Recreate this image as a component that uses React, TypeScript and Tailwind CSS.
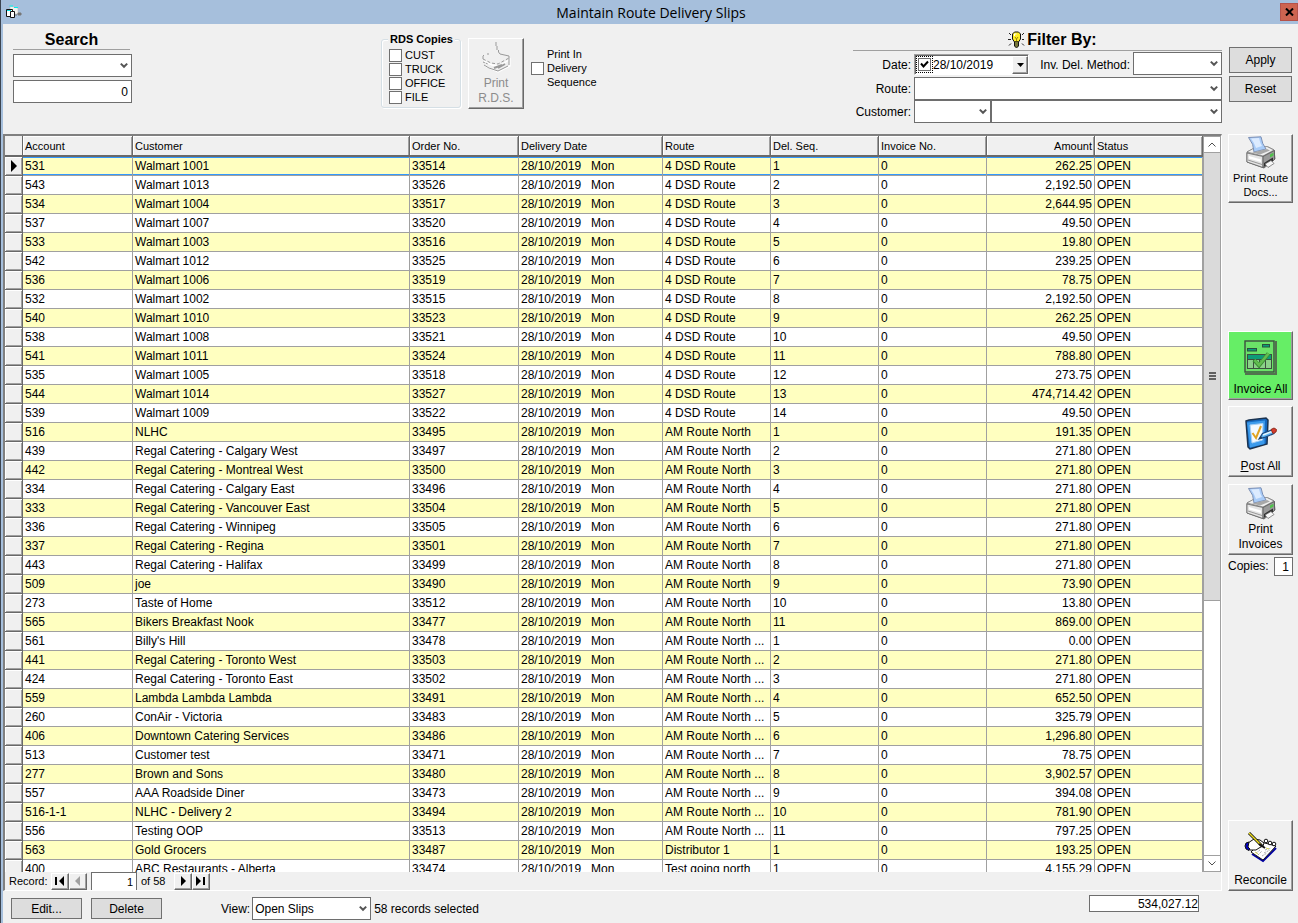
import type { ReactNode } from "react";

const columns = [
  { title: "Account", width: "w-[110px]" },
  { title: "Customer", width: "" },
  { title: "Order No.", width: "w-[109px]" },
  { title: "Delivery Date", width: "w-[144px]" },
  { title: "Route", width: "w-[108px]" },
  { title: "Del. Seq.", width: "w-[108px]" },
  { title: "Invoice No.", width: "w-[108px]" },
  { title: "Amount", width: "w-[108px]", right: true },
  { title: "Status", width: "w-[108px]" },
];

// account, customer, order, route, sequence, amount
const slips = [
  ["531", "Walmart 1001", "33514", "4 DSD Route", "1", "262.25"],
  ["543", "Walmart 1013", "33526", "4 DSD Route", "2", "2,192.50"],
  ["534", "Walmart 1004", "33517", "4 DSD Route", "3", "2,644.95"],
  ["537", "Walmart 1007", "33520", "4 DSD Route", "4", "49.50"],
  ["533", "Walmart 1003", "33516", "4 DSD Route", "5", "19.80"],
  ["542", "Walmart 1012", "33525", "4 DSD Route", "6", "239.25"],
  ["536", "Walmart 1006", "33519", "4 DSD Route", "7", "78.75"],
  ["532", "Walmart 1002", "33515", "4 DSD Route", "8", "2,192.50"],
  ["540", "Walmart 1010", "33523", "4 DSD Route", "9", "262.25"],
  ["538", "Walmart 1008", "33521", "4 DSD Route", "10", "49.50"],
  ["541", "Walmart 1011", "33524", "4 DSD Route", "11", "788.80"],
  ["535", "Walmart 1005", "33518", "4 DSD Route", "12", "273.75"],
  ["544", "Walmart 1014", "33527", "4 DSD Route", "13", "474,714.42"],
  ["539", "Walmart 1009", "33522", "4 DSD Route", "14", "49.50"],
  ["516", "NLHC", "33495", "AM Route North", "1", "191.35"],
  ["439", "Regal Catering - Calgary West", "33497", "AM Route North", "2", "271.80"],
  ["442", "Regal Catering - Montreal West", "33500", "AM Route North", "3", "271.80"],
  ["334", "Regal Catering - Calgary East", "33496", "AM Route North", "4", "271.80"],
  ["333", "Regal Catering - Vancouver East", "33504", "AM Route North", "5", "271.80"],
  ["336", "Regal Catering - Winnipeg", "33505", "AM Route North", "6", "271.80"],
  ["337", "Regal Catering - Regina", "33501", "AM Route North", "7", "271.80"],
  ["443", "Regal Catering - Halifax", "33499", "AM Route North", "8", "271.80"],
  ["509", "joe", "33490", "AM Route North", "9", "73.90"],
  ["273", "Taste of Home", "33512", "AM Route North", "10", "13.80"],
  ["565", "Bikers Breakfast Nook", "33477", "AM Route North", "11", "869.00"],
  ["561", "Billy's Hill", "33478", "AM Route North ...", "1", "0.00"],
  ["441", "Regal Catering - Toronto West", "33503", "AM Route North ...", "2", "271.80"],
  ["424", "Regal Catering - Toronto East", "33502", "AM Route North ...", "3", "271.80"],
  ["559", "Lambda Lambda Lambda", "33491", "AM Route North ...", "4", "652.50"],
  ["260", "ConAir - Victoria", "33483", "AM Route North ...", "5", "325.79"],
  ["406", "Downtown Catering Services", "33486", "AM Route North ...", "6", "1,296.80"],
  ["513", "Customer test", "33471", "AM Route North ...", "7", "78.75"],
  ["277", "Brown and Sons", "33480", "AM Route North ...", "8", "3,902.57"],
  ["557", "AAA Roadside Diner", "33473", "AM Route North ...", "9", "394.08"],
  ["516-1-1", "NLHC - Delivery 2", "33494", "AM Route North ...", "10", "781.90"],
  ["556", "Testing OOP", "33513", "AM Route North ...", "11", "797.25"],
  ["563", "Gold Grocers", "33487", "Distributor 1", "1", "193.25"],
  ["400", "ABC Restaurants - Alberta", "33474", "Test going north", "1", "4,155.29"],
];

const raised =
  "border border-t-white border-l-white border-r-[#696969] border-b-[#696969] shadow-[inset_-1px_-1px_#a0a0a0]";

function Chevron() {
  return (
    <svg className="absolute right-1 top-1/2 -mt-1 pointer-events-none" width="8" height="8" viewBox="0 0 8 8">
      <path d="M0.8 1.6 4 4.8 7.2 1.6" fill="none" stroke="#555" strokeWidth="2" />
    </svg>
  );
}

function Dropdown({ label, className, options = [""] }: { label: string; className: string; options?: string[] }) {
  return (
    <div className={`relative ${className}`}>
      <select aria-label={label} className="block w-full h-[23px] appearance-none border border-[#6e6e6e] bg-white pl-[2px] text-[12px]">
        {options.map((option) => (
          <option key={option}>{option}</option>
        ))}
      </select>
      <Chevron />
    </div>
  );
}

function FlatButton({ children, className }: { children: ReactNode; className: string }) {
  return (
    <button className={`border border-[#707070] bg-[#dddddd] text-[12px] ${className}`}>{children}</button>
  );
}

function ToolButton({ icon, children, className = "" }: { icon: ReactNode; children: ReactNode; className?: string }) {
  return (
    <button className={`flex flex-col items-center justify-end w-full ${raised} ${className}`}>
      {icon}
      {children}
    </button>
  );
}

function PrinterIcon() {
  return (
    <svg width="30" height="33" viewBox="0 0 30 33">
      <path d="M1 16 9 12 22 11 28 14 29 23 18 32 1 26Z" fill="#cfcfcf" stroke="#6c6c6c" />
      <path d="M1 16 9 11.500 21 10.500 28 14 17 20Z" fill="#efefef" stroke="#858585" strokeWidth=".8" />
      <path d="M2.500 1.500 15 0.800Q16 8 20 13L8 16Q8 8 2.500 1.500Z" fill="#a9ccf8" stroke="#7b8fb5" />
      <path d="M5 2.500 13 2Q14 7 16 10L10 12Q8.500 7 5 2.500Z" fill="#dcebff" />
      <path d="M6 16.500 21 13 24 14.500 14 18.500Z" fill="#a8a8a8" />
      <path d="M1 17 17 20.500V31.500L1 26Z" fill="#e4e4e4" stroke="#666" strokeWidth=".8" />
      <path d="M3 20 15 23.500V26L3 22.500Z" fill="#fff" />
      <path d="M2 24 16 28.500" stroke="#999" />
      <path d="M17 20.500 28.500 14.500V23.500L17 31.500Z" fill="#9a9a9a" stroke="#555" strokeWidth=".8" />
      <path d="M18 27 27 21.500V25L18 30.500Z" fill="#303030" />
      <path d="M19 28 25 24.500 28 27.500 22 31.500Z" fill="#f7f7f7" stroke="#666" strokeWidth=".7" />
      <path d="M24 18.500 27.500 16.800V19.500L24 21.500Z" fill="#4fc24b" />
    </svg>
  );
}

function DisabledPrinterIcon() {
  return (
    <svg width="32" height="32" viewBox="0 0 32 32" fill="none">
      <g stroke="#fff" strokeWidth="1.3" transform="translate(1 1)">
        <path d="M3 18 11 22 18 23 28 17M4 23 17 29 29 23V15" />
      </g>
      <g stroke="#999">
        <path d="M16 0V4M17 4V8M18.500 8V10L20 12" />
        <path d="M4 13 3 14V17M7 12H9M20 12 29 14V23" />
        <path d="M3 17 11 21 18 22 29 16" strokeDasharray="3 2" />
        <path d="M3 20 8 22" strokeDasharray="2 1" />
        <path d="M4 23 9 26 18 29 28 24" />
        <path d="M14 26 22 23M18 26 25 22" strokeWidth="2" />
      </g>
    </svg>
  );
}

function InvoiceIcon() {
  return (
    <svg width="33" height="35" viewBox="0 0 33 35">
      <path d="M1 34H32V1" fill="none" stroke="#53724f" strokeWidth="2" />
      <rect x="1" y="1" width="29" height="31" fill="#6be268" stroke="#3c4f3f" strokeWidth="1.4" />
      <rect x="3.500" y="8.500" width="9" height="2.500" fill="#0d9b78" stroke="#29503f" />
      <rect x="18.500" y="4.500" width="7" height="2.500" fill="#0d9b78" stroke="#29503f" />
      <rect x="3.500" y="14.500" width="24" height="14" fill="#8cd189" stroke="#3c4f3f" />
      <rect x="4" y="15" width="23" height="4" fill="#0d9b78" />
      <path d="M4 19.500H27M9.500 19V28M15.500 19V28M21.500 19V28" stroke="#3c4f3f" />
      <path d="M10 20 15 25.500 24.500 13.500" fill="none" stroke="#3a8f33" strokeWidth="4" />
      <path d="M10.500 20 15 25 24.500 13.500" fill="none" stroke="#62bd50" strokeWidth="2.500" />
    </svg>
  );
}

function PostIcon() {
  return (
    <svg width="32" height="33" viewBox="0 0 32 33">
      <path d="M1 4 4 3 21 1 23 3 22 27 5 32 3 30Z" fill="#1769bf" stroke="#1b3350" strokeWidth="1.500" />
      <path d="M2 5.500 20 3.500 19.500 27 5 30.500Z" fill="#3c9bec" />
      <path d="M5 8 18 6.500 17.500 23 7 26Z" fill="#f3f9ff" stroke="#a8cff4" />
      <path d="M7.500 16 11 21 16 9" fill="none" stroke="#e0a321" strokeWidth="2" />
      <path d="M14 22 17.500 16.500 27 13 29 16.500 19.500 20.500Z" fill="#5fb4f3" stroke="#1c4a80" strokeWidth="1.300" />
      <path d="M18 18 27 14.500" stroke="#e4f6ff" strokeWidth="1.500" />
      <path d="M26 12.500 29 11 31.500 12.500 31 15 28 16.500Z" fill="#d73a2c" stroke="#903020" />
      <path d="M14 22 16 19 17 21Z" fill="#23384f" />
    </svg>
  );
}

function ReconcileIcon() {
  return (
    <svg width="34" height="32" viewBox="0 0 34 32">
      <path d="M8 22 19 29 32 16" fill="none" stroke="#0000a0" strokeWidth="2" />
      <path d="M7 20 17 10 32 14 19 28Z" fill="#fff" stroke="#111" />
      <path d="M12 21 16 18M14 23 18 19M21 18 27 16M20 21 26 18M18 24 23 21" stroke="#aaa" strokeDasharray="2 1" />
      <path d="M11 20 14 22M22 16 25 17" stroke="#d8d850" />
      <path d="M4 11 7 9 10 7 16 8 20 11 19 14 15 16 12 18 6 18 3 16Z" fill="#fff" stroke="#111" />
      <path d="M5 10 2 11 1 14 2 17 5 18.500 6 17 4 15Z" fill="#0000c0" stroke="#111" />
      <circle cx="22" cy="9" r="1.800" fill="#fff" stroke="#111" />
      <circle cx="26" cy="11" r="1.800" fill="#fff" stroke="#111" />
      <circle cx="30" cy="12" r="1.800" fill="#fff" stroke="#111" />
      <path d="M5 1 18 14" stroke="#111" strokeWidth="3" />
      <path d="M5 1 17 13" stroke="#f0e020" strokeWidth="1.400" />
      <path d="M15 12 21 16" stroke="#111" strokeWidth="2" />
    </svg>
  );
}

function BulbIcon() {
  return (
    <svg width="17" height="18" viewBox="0 0 17 18">
      <path d="M1 2 3 4M0 8.500H3M1 14.500 3 12.500M16 2 14 4M14 8.500H16M16 14.500 14 12.500" stroke="#222" />
      <path d="M4.500 3 6.500 1H10.500L12.500 3V8L10.500 11H6.500L4.500 8Z" fill="#ffee22" stroke="#111" />
      <path d="M6.500 5V3H8.500" stroke="#fff" fill="none" />
      <path d="M7 6 8.500 8V11M10 6 8.500 8" stroke="#9a8610" fill="none" />
      <path d="M6.500 11H10.500V15L8.500 17 6.500 15Z" fill="#d8d860" stroke="#111" />
      <path d="M7 13H10M7 15H10" stroke="#111" />
    </svg>
  );
}

function FormIcon() {
  return (
    <svg width="16" height="14" viewBox="0 0 16 14">
      <path d="M4 1 12 3V9H4Z" fill="#f2f2ee" stroke="#bbb" strokeWidth=".6" />
      <path d="M3.500 1H7M8 2.500H12" stroke="#00f0f0" />
      <path d="M12 8H15V10H12ZM9 10H11" stroke="#777" fill="#777" />
      <path d="M0.500 4.500H6.500V11.500H0.500Z" fill="#fff" stroke="#111" />
      <path d="M1 5.500H5" stroke="#00e0e0" />
      <path d="M4.500 6.500H8.500V12.500H4.500Z" fill="#fff" stroke="#111" />
    </svg>
  );
}

function TitleBar() {
  return (
    <header className="flex items-center h-6 shrink-0 bg-[#a6bfdc] pl-[5px]">
      <FormIcon />
      <h1 className="flex-1 pt-[2px] text-center font-['Open_Sans',sans-serif] text-[14px] leading-6">Maintain Route Delivery Slips</h1>
      <button aria-label="Close" className="flex items-center justify-center w-[18px] h-[18px] border border-[#b5524a] bg-[#cd6450]">
        <svg width="9" height="8" viewBox="0 0 9 8">
          <path d="M1 0.500 8 7.500M8 0.500 1 7.500" stroke="#000" strokeWidth="2" />
        </svg>
      </button>
    </header>
  );
}

function SearchPanel() {
  return (
    <div className="w-[119px] ml-[10px] mt-[5px]">
      <h2 className="mr-[2px] border-b border-[#a0a0a0] pt-[2px] text-center text-[16px] leading-[18px] font-bold">Search</h2>
      <Dropdown label="Search field" className="mt-1" />
      <input aria-label="Search value" defaultValue="0" className="block w-full h-[23px] mt-[3px] border border-[#6e6e6e] bg-white pr-[3px] text-right text-[12px]" />
    </div>
  );
}

function CopiesPanel() {
  return (
    <div className="flex items-start">
      <fieldset className="relative w-20 h-[69px] mt-[15px] border border-[#d5dfe5] rounded-[3px] shadow-[1px_1px_#fff,inset_1px_1px_#fff] pt-2 pl-[7px]">
        <legend className="absolute -top-[9px] left-[6px] bg-[#f0f0f0] px-[2px] text-[11px] leading-4 font-bold whitespace-nowrap">RDS Copies</legend>
        {["CUST", "TRUCK", "OFFICE", "FILE"].map((copy) => (
          <label key={copy} className="flex items-center gap-[3px] h-[14px] text-[11px]">
            <input type="checkbox" className="appearance-none w-[13px] h-[13px] border border-[#707070] bg-white" />
            {copy}
          </label>
        ))}
      </fieldset>
      <button disabled className={`flex flex-col items-center w-14 h-[71px] mt-[14px] ml-[7px] pt-[3px] text-[12px] leading-[15px] text-[#8c8c8c] ${raised}`}>
        <DisabledPrinterIcon />
        <span className="mt-[2px]">Print</span>
        <span>R.D.S.</span>
      </button>
      <label className="flex items-center gap-[3px] mt-[23px] ml-[7px] text-[11px] leading-[14px]">
        <input type="checkbox" className="appearance-none w-[13px] h-[13px] border border-[#707070] bg-white" />
        <span className="w-[54px]">Print In Delivery Sequence</span>
      </label>
    </div>
  );
}

function FilterPanel() {
  return (
    <div className="w-[369px] mt-[5px] text-[12px]">
      <h2 className="flex items-center justify-center gap-[2px] h-[22px] pl-[30px] border-b border-[#a0a0a0] text-[16px] font-bold">
        <BulbIcon />
        Filter By:
      </h2>
      <div className="flex items-center h-[23px] mt-px">
        <span className="w-[58px] pt-[3px] text-right">Date:</span>
        <div className="flex items-center w-[115px] h-[21px] ml-[3px] mt-[2px] border border-r-white border-b-white border-t-[#a0a0a0] border-l-[#a0a0a0] bg-white shadow-[inset_1px_1px_#696969]">
          <span className="relative ml-px p-px border border-dotted border-black">
            <input type="checkbox" defaultChecked aria-label="Use date" className="block appearance-none w-[13px] h-[13px] border border-[#707070] bg-white" />
            <svg className="absolute left-[3px] top-[3px] pointer-events-none" width="9" height="9" viewBox="0 0 9 9">
              <path d="M1 3.500 3.500 6.500 8 1.500" fill="none" stroke="#000" strokeWidth="2" />
            </svg>
          </span>
          <input aria-label="Date" defaultValue="28/10/2019" className="flex-1 min-w-0 h-[17px]" />
          <button aria-label="Pick date" className={`flex items-center justify-center w-4 h-[18px] bg-[#f0f0f0] ${raised}`}>
            <svg width="7" height="4" viewBox="0 0 7 4">
              <path d="M0 0H7L3.500 4Z" />
            </svg>
          </button>
        </div>
        <span className="flex-1 pt-[3px] pr-[3px] text-right whitespace-nowrap">Inv. Del. Method:</span>
        <Dropdown label="Inv. Del. Method" className="w-[89px]" />
      </div>
      <div className="flex items-center mt-[2px]">
        <span className="w-[58px] mr-[3px] text-right">Route:</span>
        <Dropdown label="Route" className="flex-1" />
      </div>
      <div className="flex items-center">
        <span className="w-[58px] mr-[3px] text-right">Customer:</span>
        <Dropdown label="Customer number" className="w-[77px]" />
        <Dropdown label="Customer name" className="flex-1" />
      </div>
    </div>
  );
}

function SlipTable() {
  return (
    <div className="flex-1 min-w-0 overflow-hidden">
      <table className="w-full table-fixed border-separate border-spacing-0 text-[12px] leading-[18px]">
        <colgroup>
          <col className="w-[18px]" />
          {columns.map((column) => (
            <col key={column.title} className={column.width} />
          ))}
        </colgroup>
        <thead>
          <tr className="bg-[#f0f0f0] text-[11px]">
            <th className="h-[21px] p-0 border-r border-b-2 border-[#696969]" />
            {columns.map((column) => (
              <th
                key={column.title}
                className={`h-[21px] px-[2px] py-0 border-r border-b-2 border-[#696969] font-normal shadow-[inset_1px_1px_#fff,inset_-1px_0_#a0a0a0] ${column.right ? "text-right" : "text-left"}`}
              >
                {column.title}
              </th>
            ))}
          </tr>
        </thead>
        <tbody>
          {slips.map(([account, customer, order, route, sequence, amount], index) => (
            <tr key={order} className={index % 2 ? "bg-white" : "bg-[#ffffc0]"}>
              <td className="h-[19px] p-0 border-r border-b border-[#696969] bg-[#f0f0f0] shadow-[inset_1px_1px_#fff,inset_-1px_-1px_#a0a0a0]">
                {index === 0 && (
                  <svg className="ml-[6px]" width="6" height="12" viewBox="0 0 6 12">
                    <path d="M0 0 6 6 0 12Z" />
                  </svg>
                )}
              </td>
              {[account, customer, order, "28/10/2019   Mon", route, sequence, "0", amount, "OPEN"].map((value, cell) => (
                <td
                  key={cell}
                  className={`h-[19px] px-[2px] py-0 border-r border-b border-[#a0a0a0] whitespace-pre overflow-hidden ${cell === 7 ? "text-right" : ""} ${index === 0 ? "shadow-[inset_0_1px_0_0_#3399ff,inset_0_-1px_0_0_#3399ff]" : ""}`}
                >
                  {value}
                </td>
              ))}
            </tr>
          ))}
        </tbody>
      </table>
    </div>
  );
}

function ScrollBar() {
  return (
    <div className="flex flex-col w-[18px] border border-[#a0a0a0] bg-white">
      <button aria-label="Scroll up" className="flex items-center justify-center h-4 border-b border-[#a0a0a0]">
        <svg width="8" height="5" viewBox="0 0 8 5">
          <path d="M0.500 4.500 4 1 7.500 4.500" fill="none" stroke="#505050" />
        </svg>
      </button>
      <div className="flex flex-col items-center justify-center gap-px h-[61%] border-b border-[#a0a0a0] bg-[#dadada]">
        <span className="w-[7px] h-[2px] bg-[#606060]" />
        <span className="w-[7px] h-[2px] bg-[#606060]" />
        <span className="w-[7px] h-[2px] bg-[#606060]" />
      </div>
      <button aria-label="Scroll down" className="flex items-center justify-center h-4 mt-auto border-t border-[#a0a0a0]">
        <svg width="8" height="5" viewBox="0 0 8 5">
          <path d="M0.500 0.500 4 4 7.500 0.500" fill="none" stroke="#505050" />
        </svg>
      </button>
    </div>
  );
}

function NavButton({ label, path, disabled }: { label: string; path: string; disabled?: boolean }) {
  return (
    <button aria-label={label} disabled={disabled} className={`flex items-center justify-center w-[18px] h-[17px] ${raised}`}>
      <svg width="12" height="10" viewBox="0 0 12 10" fill={disabled ? "#a0a0a0" : "#000"}>
        <path d={path} />
      </svg>
    </button>
  );
}

function RecordNav() {
  return (
    <div className="flex items-center h-[18px] pl-1 text-[11px]">
      <span className="w-[42px]">Record:</span>
      <NavButton label="First record" path="M1 1H3V9H1ZM10 0V10L5 5Z" />
      <NavButton label="Previous record" path="M8 0V10L3 5Z" disabled />
      <input aria-label="Current record" defaultValue="1" className="w-[46px] h-[18px] mx-1 border border-b-0 border-[#6e6e6e] bg-white pr-[3px] text-right" />
      <span className="w-[33px]">of 58</span>
      <NavButton label="Next record" path="M4 0V10L9 5Z" />
      <NavButton label="Last record" path="M1 0V10L6 5ZM8 1H10V9H8Z" />
    </div>
  );
}

function SideBar() {
  return (
    <aside className="flex flex-col w-[65px] mr-[5px] text-[12px] leading-[15px]">
      <ToolButton icon={<PrinterIcon />} className="h-[69px] pb-[3px] text-[11px] leading-[14px]">
        <span className="mt-[2px]">Print Route</span>
        <span>Docs...</span>
      </ToolButton>
      <ToolButton icon={<InvoiceIcon />} className="h-[69px] mt-32 pb-[2px] bg-[#66ee66]">
        <span className="mt-[7px] whitespace-nowrap">Invoice All</span>
      </ToolButton>
      <ToolButton icon={<PostIcon />} className="h-[71px] mt-[6px] pb-[2px]">
        <span className="mt-[9px]"><u>P</u>ost All</span>
      </ToolButton>
      <ToolButton icon={<PrinterIcon />} className="h-[71px] mt-[7px] pb-[2px]">
        <span className="mt-[2px]">Print</span>
        <span>Invoices</span>
      </ToolButton>
      <label className="flex items-center justify-between mt-[2px] whitespace-nowrap">
        Copies:
        <input defaultValue="1" className="w-[19px] h-[19px] border border-[#6e6e6e] bg-white pr-[3px] text-right" />
      </label>
      <ToolButton icon={<ReconcileIcon />} className="h-[71px] mt-auto pb-[2px]">
        <span className="mt-[9px]">Reconcile</span>
      </ToolButton>
    </aside>
  );
}

export default function App() {
  return (
    <div className="flex flex-col h-screen overflow-hidden bg-[#f0f0f0] font-['Liberation_Sans',Arial,sans-serif] text-black border-l border-[#3c4450]">
      <TitleBar />
      <div className="flex flex-col flex-1 min-h-0 border-l-2 border-[#a6bfdc]">
        <div className="flex items-start justify-between h-[110px] shrink-0">
          <div className="flex items-start gap-[249px]">
            <SearchPanel />
            <CopiesPanel />
          </div>
          <div className="flex items-start pr-[6px]">
            <FilterPanel />
            <div className="flex flex-col gap-[3px] w-[63px] mt-[23px] ml-[7px]">
              <FlatButton className="h-[26px]">Apply</FlatButton>
              <FlatButton className="h-[26px]">Reset</FlatButton>
            </div>
          </div>
        </div>

        <main className="flex flex-1 min-h-0 gap-[6px]">
          <div className="flex flex-col flex-1 min-w-0 border border-l-2 border-t-2 border-t-[#808080] border-l-[#808080] border-r-white border-b-white">
            <div className="flex flex-1 min-h-0">
              <SlipTable />
              <ScrollBar />
            </div>
            <RecordNav />
          </div>
          <SideBar />
        </main>

        <footer className="flex items-start h-8 shrink-0 pl-2 text-[12px]">
          <FlatButton className="w-[71px] h-[21px] mt-[7px]">Edit...</FlatButton>
          <FlatButton className="w-[71px] h-[21px] mt-[7px] ml-[9px]">Delete</FlatButton>
          <div className="flex items-center mt-[6px] ml-[59px]">
            <span className="mr-[2px]">View:</span>
            <Dropdown label="View" className="w-[119px]" options={["Open Slips"]} />
            <span className="ml-[3px]">58 records selected</span>
          </div>
          <input aria-label="Total amount" readOnly defaultValue="534,027.12" className="w-[110px] h-[17px] mt-1 ml-auto mr-[99px] border border-[#6e6e6e] bg-white text-right" />
        </footer>
      </div>
    </div>
  );
}
